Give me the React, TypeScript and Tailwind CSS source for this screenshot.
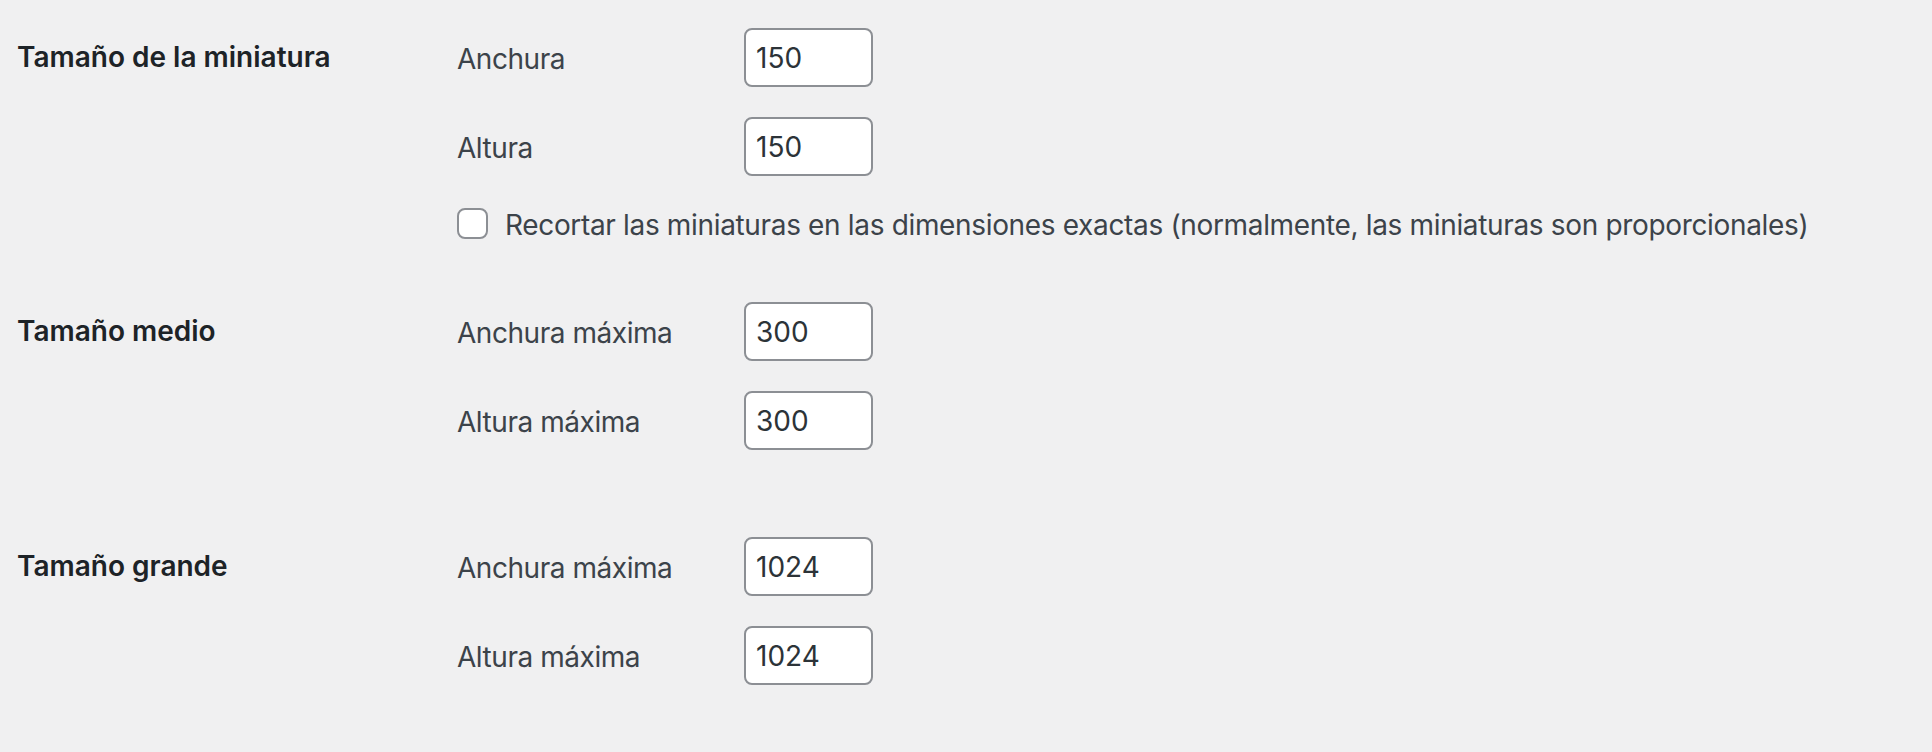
import React from "react";

function Field({ label, value, first }: { label: string; value: string; first?: boolean }) {
  return (
    <div className={"flex items-center h-[59px] " + (first ? "" : "mt-[30px]")}>
      <label className="w-[287px] pt-[2px] text-[28px] leading-[36px] tracking-[-0.45px] text-[#3c434a]">{label}</label>
      <input
        type="text"
        readOnly
        value={value}
        className="w-[129px] h-[59px] rounded-[8px] border-2 border-[#8c8f94] bg-white pl-[10px] pt-[1px] text-[28px] leading-[36px] text-[#2c3338] outline-none"
      />
    </div>
  );
}

function Heading({ children }: { children: React.ReactNode }) {
  return (
    <div className="w-[440px] shrink-0 pt-[11px] text-[28px] leading-[36px] font-semibold text-[#1d2327]">
      {children}
    </div>
  );
}

export default function App() {
  return (
    <div
      className="h-[752px] w-full overflow-hidden bg-[#f0f0f1] pt-[28px] pl-[17px]"
      style={{ fontFamily: "Inter, 'Noto Sans', sans-serif" }}
    >
      <div className="flex">
        <Heading>Tamaño de la miniatura</Heading>
        <div className="flex flex-col">
          <Field label="Anchura" value="150" first />
          <Field label="Altura" value="150" />
          <div className="mt-[32px] flex h-[31px] items-center gap-[17px]">
            <span className="block h-[31px] w-[31px] shrink-0 rounded-[8px] border-2 border-[#8c8f94] bg-white" />
            <span className="pt-[3px] text-[28px] leading-[36px] tracking-[-0.34px] text-[#3c434a] whitespace-nowrap">
              Recortar las miniaturas en las dimensiones exactas (normalmente, las miniaturas son proporcionales)
            </span>
          </div>
        </div>
      </div>

      <div className="mt-[63px] flex">
        <Heading>Tamaño medio</Heading>
        <div className="flex flex-col">
          <Field label="Anchura máxima" value="300" first />
          <Field label="Altura máxima" value="300" />
        </div>
      </div>

      <div className="mt-[87px] flex">
        <Heading>Tamaño grande</Heading>
        <div className="flex flex-col">
          <Field label="Anchura máxima" value="1024" first />
          <Field label="Altura máxima" value="1024" />
        </div>
      </div>
    </div>
  );
}
